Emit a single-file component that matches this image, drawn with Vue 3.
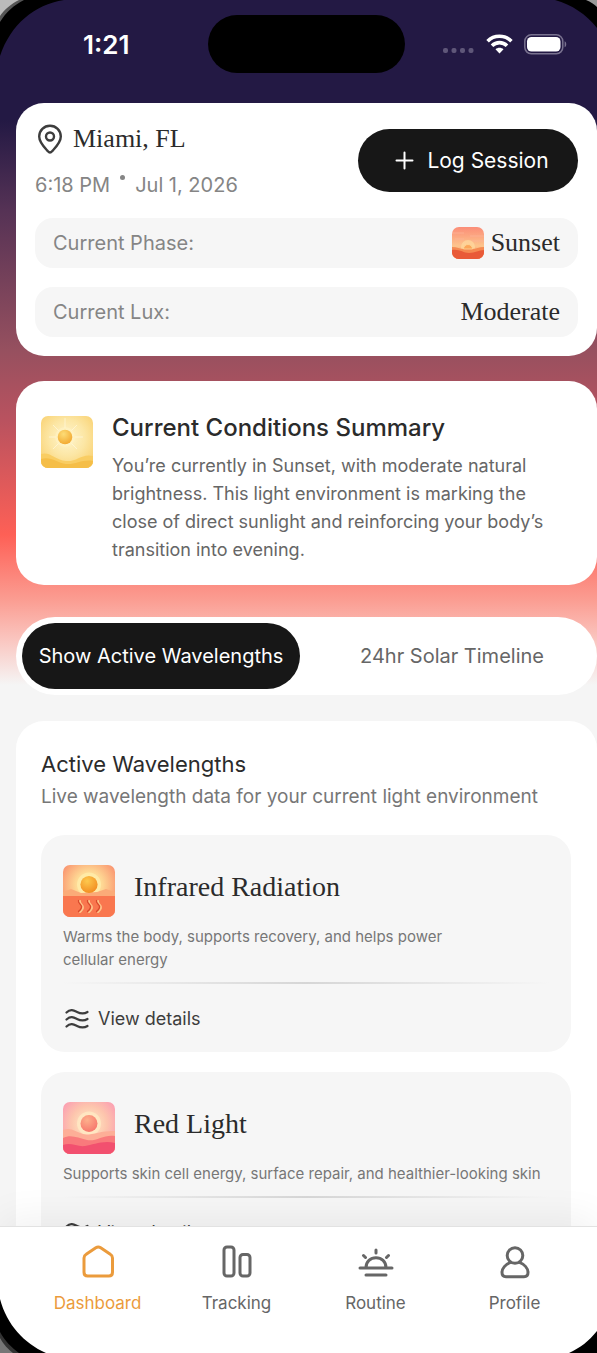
<script setup>
import { ref } from 'vue'

const activeTab = ref('wavelengths')
const activeNav = ref('dashboard')

const tabs = [
  { id: 'wavelengths', label: 'Show Active Wavelengths' },
  { id: 'timeline', label: '24hr Solar Timeline' },
]

const wavelengths = [
  {
    id: 'infrared',
    title: 'Infrared Radiation',
    text: 'Warms the body, supports recovery, and helps power\ncellular energy',
  },
  {
    id: 'red',
    title: 'Red Light',
    text: 'Supports skin cell energy, surface repair, and healthier-looking skin',
  },
]

const navItems = [
  { id: 'dashboard', label: 'Dashboard' },
  { id: 'tracking', label: 'Tracking' },
  { id: 'routine', label: 'Routine' },
  { id: 'profile', label: 'Profile' },
]
</script>

<template>
  <div class="phone">
    <header class="status-bar">
      <span class="time">1:21</span>
      <span class="island"></span>
      <div class="status-icons">
        <svg width="32" height="6" viewBox="0 0 32 6" fill="#5f5779">
          <rect x="0" y="0" width="5" height="5" rx="2" />
          <rect x="8.500" y="0" width="5" height="5" rx="2" />
          <rect x="17" y="0" width="5" height="5" rx="2" />
          <rect x="25.500" y="0" width="5" height="5" rx="2" />
        </svg>
        <svg width="27" height="20" viewBox="0 0 27 20" fill="none" stroke="#fff" stroke-width="3.600">
          <path d="M1.600 7.200C8 .6 19 .6 25.400 7.200" />
          <path d="M6 11.800c4.200-4.200 10.800-4.200 15 0" />
          <path d="M13.500 19.500l-4-4.300c2.300-2 5.700-2 8 0z" fill="#fff" stroke="none" />
        </svg>
        <svg width="43" height="21" viewBox="0 0 43 21">
          <rect x=".8" y=".8" width="38" height="19" rx="6.500" fill="none" stroke="#79728f" stroke-width="1.500" />
          <rect x="3" y="3" width="33.500" height="14.600" rx="4.500" fill="#fff" />
          <path d="M40.600 7.300c2.200.6 2.200 5.400 0 6z" fill="#79728f" />
        </svg>
      </div>
    </header>

    <main class="content">
      <section class="card location-card">
        <div class="location-head">
          <div class="location-info">
            <h1 class="place">
              <svg width="26" height="30" viewBox="0 0 26 30" fill="none" stroke="#3d3d3d" stroke-width="2.400">
                <path d="M13 28.500c-1.200 0-1.800-.9-2.700-1.900C6.600 22.600 2.200 18.300 2.200 12.600 2.200 6.400 7 1.700 13 1.700s10.800 4.700 10.800 10.900c0 5.700-4.400 10-8.100 14-.9 1-1.500 1.900-2.700 1.900z" />
                <circle cx="13" cy="12.500" r="4" />
              </svg>
              Miami, FL
            </h1>
            <p class="date"><span>6:18 PM</span><i class="dot"></i><span>Jul 1, 2026</span></p>
          </div>
          <button class="log-btn" type="button">
            <svg width="19" height="19" viewBox="0 0 19 19" stroke="#fff" stroke-width="2" stroke-linecap="round">
              <path d="M9.500 1.500v16M1.500 9.500h16" />
            </svg>
            Log Session
          </button>
        </div>

        <div class="stat">
          <span>Current Phase:</span>
          <strong>
            <svg class="art" width="32" height="32" viewBox="0 0 32 32">
              <defs>
                <linearGradient id="sunsetSky" x1="0" y1="0" x2="0" y2="1">
                  <stop offset="0" stop-color="#fb8d78" />
                  <stop offset=".6" stop-color="#fdc58c" />
                  <stop offset="1" stop-color="#f5714b" />
                </linearGradient>
              </defs>
              <rect width="32" height="32" fill="url(#sunsetSky)" />
              <path d="M0 6h12M18 9h14M3 12h9M20 14h12" stroke="#fdb49a" stroke-width="1" opacity=".7" />
              <circle cx="16" cy="20" r="7" fill="#fedaa0" opacity=".7" />
              <path d="M0 20c5 0 8 2 12 2h8c4 0 7-2 12-2v12H0z" fill="#f58a52" />
              <path d="M11.500 22a4.500 4.500 0 0 1 9 0z" fill="#fba65a" stroke="#fed79a" stroke-width=".8" />
              <path d="M0 23c8-1 11 3 17 3s10-3 15-3v9H0z" fill="#e95a38" />
            </svg>
            Sunset
          </strong>
        </div>
        <div class="stat">
          <span>Current Lux:</span>
          <strong>Moderate</strong>
        </div>
      </section>

      <section class="card summary-card">
        <svg class="art" width="52" height="52" viewBox="0 0 52 52">
          <defs>
            <radialGradient id="dayGlow" cx=".5" cy=".42" r=".7">
              <stop offset="0" stop-color="#fff6cf" />
              <stop offset=".5" stop-color="#fce6a4" />
              <stop offset="1" stop-color="#f9ce69" />
            </radialGradient>
            <radialGradient id="dayBall" cx=".4" cy=".3" r=".75">
              <stop offset="0" stop-color="#fddc76" />
              <stop offset="1" stop-color="#f2a72e" />
            </radialGradient>
          </defs>
          <rect width="52" height="52" fill="url(#dayGlow)" />
          <path d="M24 2v10M8 21h7M34 21h8M12 9l6 6M36 9l-6 6M12 33l6-6M36 33l-6-6" stroke="#fff8dd" opacity=".7" />
          <circle cx="24" cy="21" r="10" fill="#fff4c4" opacity=".6" />
          <circle cx="24" cy="21" r="7.300" fill="url(#dayBall)" />
          <path d="M0 38c9-3 14 6 25 7s16-8 27-5v12H0z" fill="#f9cd63" />
          <path d="M0 43c10-3 16 4 25 5s17-5 27-3v7H0z" fill="#f5be48" />
        </svg>
        <div>
          <h2>Current Conditions Summary</h2>
          <p>
            You’re currently in Sunset, with moderate natural brightness. This light environment is
            marking the close of direct sunlight and reinforcing your body’s transition into evening.
          </p>
        </div>
      </section>

      <div class="tabs">
        <button
          v-for="tab in tabs"
          :key="tab.id"
          type="button"
          :class="{ active: activeTab === tab.id }"
          @click="activeTab = tab.id"
        >
          {{ tab.label }}
        </button>
      </div>

      <section class="card waves-card">
        <h2>Active Wavelengths</h2>
        <p class="sub">Live wavelength data for your current light environment</p>

        <article v-for="wave in wavelengths" :key="wave.id" class="wave">
          <div class="wave-head">
            <svg v-if="wave.id === 'infrared'" class="art" width="52" height="52" viewBox="0 0 52 52">
              <defs>
                <radialGradient id="irSky" cx=".5" cy=".38" r=".65">
                  <stop offset="0" stop-color="#fff3b0" />
                  <stop offset=".4" stop-color="#fed793" />
                  <stop offset="1" stop-color="#f98769" />
                </radialGradient>
                <radialGradient id="irBall" cx=".4" cy=".3" r=".75">
                  <stop offset="0" stop-color="#fdc94e" />
                  <stop offset="1" stop-color="#f28a1f" />
                </radialGradient>
              </defs>
              <rect width="52" height="52" fill="url(#irSky)" />
              <circle cx="26" cy="19.500" r="12" fill="#fff3b0" opacity=".6" />
              <path d="M0 27l8-3 10 4 16-1 9-3 9 3v6H0z" fill="#fbab78" />
              <circle cx="26" cy="19.500" r="8.600" fill="url(#irBall)" />
              <path d="M0 31h52v21H0z" fill="#f9774f" />
              <g fill="none" stroke-linecap="round">
                <path d="M17 36c-1 3 4 4 3 7s-2 3-3 4M26 36c-1 3 4 4 3 7s-2 3-3 4M35 36c-1 3 4 4 3 7s-2 3-3 4" stroke="#fdc48a" stroke-width="2" />
                <path d="M15.500 35.500c-1 3 4 4 3 7s-2 3-3 4M24.500 35.500c-1 3 4 4 3 7s-2 3-3 4M33.500 35.500c-1 3 4 4 3 7s-2 3-3 4" stroke="#d94a2c" stroke-width="1.300" />
              </g>
            </svg>
            <svg v-else class="art" width="52" height="52" viewBox="0 0 52 52">
              <defs>
                <radialGradient id="redSky" cx=".5" cy=".42" r=".62">
                  <stop offset="0" stop-color="#fff0c8" />
                  <stop offset=".55" stop-color="#fdc5ad" />
                  <stop offset="1" stop-color="#fb9db2" />
                </radialGradient>
                <radialGradient id="redBall" cx=".4" cy=".3" r=".8">
                  <stop offset="0" stop-color="#fdb08c" />
                  <stop offset="1" stop-color="#f6716a" />
                </radialGradient>
              </defs>
              <rect width="52" height="52" fill="url(#redSky)" />
              <circle cx="26" cy="21.500" r="12" fill="#fff0c8" opacity=".6" />
              <circle cx="26" cy="21.500" r="8.500" fill="url(#redBall)" />
              <path d="M0 28c8-3 13 2 20 4s20-4 32-3v23H0z" fill="#fdae97" />
              <path d="M0 36c8-4 15 0 24 2s17-6 28-4v18H0z" fill="#f97a7c" />
              <path d="M0 43c8-3 14 2 22 1s18-6 30-3v11H0z" fill="#f2506f" />
            </svg>
            <h3>{{ wave.title }}</h3>
          </div>
          <p class="wave-text">{{ wave.text }}</p>
          <hr />
          <button class="details-btn" type="button">
            <svg width="24" height="20" viewBox="0 0 24 20" fill="none" stroke="#3d3d3d" stroke-width="2.200" stroke-linecap="round">
              <path d="M1.500 3.500C5.500-.5 9 1.500 12 3s6.500 2.500 10.500 0" />
              <path d="M1.500 10.500c4-4 7.500-2 10.500-.5s6.500 2.500 10.500 0" />
              <path d="M1.500 17.500c4-4 7.500-2 10.500-.5s6.500 2.500 10.500 0" />
            </svg>
            View details
          </button>
        </article>
      </section>
    </main>

    <nav class="bottom-nav">
      <a
        v-for="item in navItems"
        :key="item.id"
        href="#"
        :class="{ active: activeNav === item.id }"
        @click.prevent="activeNav = item.id"
      >
        <svg
          width="36" height="36" viewBox="0 0 36 36" fill="none" stroke="currentColor"
          stroke-width="3" stroke-linecap="round" stroke-linejoin="round"
        >
          <path v-if="item.id === 'dashboard'" d="M4 14c0-1.800.7-2.800 2.200-3.700l9.600-6.500c1.700-1.100 3.200-1.100 4.900 0l9.600 6.500c1.500.9 2.200 1.900 2.200 3.700v14.300c0 2.300-1.300 3.700-3.700 3.700H7.700C5.300 32 4 30.600 4 28.300z" />
          <g v-else-if="item.id === 'tracking'">
            <rect x="5" y="3" width="10" height="29" rx="3" />
            <rect x="21" y="10.500" width="10" height="21.500" rx="3" />
          </g>
          <path v-else-if="item.id === 'routine'" d="M2 24h32M8 31h20M8 23.500c0-6 4.500-9.800 10-9.800s10 3.800 10 9.800M18 6v3M5.500 11.500l2 2M30.500 11.500l-2 2" />
          <g v-else>
            <circle cx="18" cy="11.500" r="7.800" />
            <path d="M13.500 18.300C8.500 20.300 5 24.500 5 28.500c0 2.700 1.400 4.200 4 4.200h18c2.600 0 4-1.500 4-4.200 0-4-3.500-8.200-8.500-10.200" />
          </g>
        </svg>
        {{ item.label }}
      </a>
    </nav>

    <svg class="corner top-left" width="64" height="56" viewBox="0 0 64 56">
      <path d="M0 0h64C34 5 11 24 0 56z" fill="#000" />
      <path d="M0 0h24C14 5 6 12 0 22z" fill="#555" />
      <path d="M0 0h19C11 4 4 10 0 16z" fill="#bbb" />
    </svg>
    <svg class="corner top-right" width="42" height="28" viewBox="0 0 42 28">
      <path d="M0 0c17 5 31 14 42 28V0z" fill="#000" />
      <path d="M31 0c5 2 8 4 11 7V0z" fill="#999" />
    </svg>
    <svg class="corner bottom-left" width="46" height="54" viewBox="0 0 46 54">
      <path d="M0 0c7 26 24 44 46 54H0z" fill="#000" />
      <path d="M0 33c5 9 11 15 19 21H0z" fill="#333" />
      <path d="M0 39c4 7 8 11 13 15H0z" fill="#777" />
    </svg>
    <svg class="corner bottom-right" width="28" height="22" viewBox="0 0 28 22">
      <path d="M0 22C11 17 20 10 28 0v22z" fill="#000" />
    </svg>
  </div>
</template>

<style>
body {
  margin: 0;
}
</style>

<style scoped>
.phone {
  position: relative;
  display: flex;
  flex-direction: column;
  height: 100vh;
  overflow: hidden;
  font-family: Inter, "Liberation Sans", sans-serif;
  color: #2b2b2b;
  background: #f5f5f5 linear-gradient(#231944 0, #231944 120px, #553255 210px, #96505f 350px, #b9525f 420px, #fe6056 535px, #fb9d92 600px, #fac6c0 640px, #f5f5f5 685px);
}
.phone * {
  box-sizing: border-box;
}
h1, h2, h3, p {
  margin: 0;
  font-weight: 400;
}
button {
  font: inherit;
  border: none;
  cursor: pointer;
}

.status-bar {
  flex: none;
  display: grid;
  grid-template-columns: 192px 197px 1fr;
  align-items: center;
  height: 103px;
  padding: 0 30px 15px 16px;
}
.time {
  padding-left: 67px;
  font-size: 26px;
  font-weight: 600;
  color: #fff;
}
.island {
  height: 58px;
  border-radius: 29px;
  background: #000;
}
.status-icons {
  display: flex;
  align-items: center;
  justify-content: flex-end;
  gap: 11px;
}
.status-icons svg:first-child {
  margin-top: 14px;
}

.content {
  flex: 1;
  min-height: 0;
  overflow: hidden;
  padding-left: 16px;
}
.card {
  border-radius: 28px;
  background: #fff;
}
.art {
  flex: none;
  border-radius: 7px;
}

.location-card {
  display: flex;
  flex-direction: column;
  gap: 19px;
  padding: 19px;
}
.location-head {
  display: flex;
  justify-content: space-between;
  height: 77px;
}
.place {
  display: flex;
  align-items: center;
  gap: 10px;
  padding-left: 2px;
  font-family: "Liberation Serif", serif;
  font-size: 26px;
  line-height: 34px;
}
.date {
  display: flex;
  margin-top: 15px;
  font-size: 20px;
  line-height: 28px;
  color: #858585;
}
.dot {
  width: 5px;
  height: 5px;
  margin: 4px 10px 0;
  border-radius: 50%;
  background: #858585;
}
.log-btn {
  display: flex;
  align-items: center;
  justify-content: center;
  gap: 13px;
  width: 220px;
  height: 63px;
  margin-top: 7px;
  padding: 0 0 0 8px;
  border-radius: 32px;
  background: #171717;
  color: #fff;
  font-size: 21px;
}
.stat {
  display: flex;
  align-items: center;
  justify-content: space-between;
  height: 50px;
  padding: 0 18px;
  border-radius: 18px;
  background: #f6f6f6;
  font-size: 20px;
  color: #858585;
}
.stat strong {
  display: flex;
  align-items: center;
  gap: 7px;
  font-family: "Liberation Serif", serif;
  font-size: 26px;
  font-weight: 400;
  color: #2b2b2b;
}

.summary-card {
  display: flex;
  gap: 19px;
  margin-top: 25px;
  padding: 30px 26px 21px 25px;
}
.summary-card .art {
  margin-top: 5px;
}
.summary-card h2 {
  font-size: 24px;
  font-weight: 500;
  line-height: 34px;
}
.summary-card p {
  margin-top: 7px;
  font-size: 18px;
  line-height: 28px;
  color: #666;
}

.tabs {
  display: flex;
  gap: 13px;
  margin-top: 32px;
  padding: 6px;
  border-radius: 39px;
  background: #fff;
}
.tabs button {
  flex: 1 1 0;
  height: 66px;
  padding: 0;
  border-radius: 33px;
  background: transparent;
  color: #666;
  font-size: 20px;
  white-space: nowrap;
}
.tabs button.active {
  background: #171717;
  color: #fff;
}

.waves-card {
  margin-top: 26px;
  padding: 28px 26px 28px 25px;
}
.waves-card h2 {
  font-size: 22px;
  line-height: 30px;
}
.sub {
  margin-top: 4px;
  font-size: 19px;
  line-height: 28px;
  color: #777;
}
.wave {
  margin-top: 20px;
  padding: 30px 22px 19px;
  border-radius: 24px;
  background: #f6f6f6;
}
.sub + .wave {
  margin-top: 24px;
}
.wave-head {
  display: flex;
  align-items: center;
  gap: 19px;
}
.wave h3 {
  padding-bottom: 8px;
  font-family: "Liberation Serif", serif;
  font-size: 28px;
  line-height: 34px;
}
.wave-text {
  margin-top: 8px;
  font-size: 15px;
  line-height: 23px;
  color: #777;
  white-space: pre-line;
}
hr {
  height: 2px;
  margin: 11px 0 21px;
  border: none;
  background: linear-gradient(90deg, transparent, #d6d6d6 50%, transparent);
}
.details-btn {
  display: flex;
  align-items: center;
  gap: 9px;
  padding: 0 2px;
  background: transparent;
  color: #3d3d3d;
  font-size: 18px;
  line-height: 28px;
}

.bottom-nav {
  position: relative;
  flex: none;
  display: flex;
  height: 127px;
  padding: 17px 13px 0 28px;
  border-top: 1px solid #e2e2e2;
  background: #fff;
  box-shadow: 0 -8px 36px rgba(0, 0, 0, 0.06);
}
.bottom-nav a {
  flex: 1 1 0;
  display: flex;
  flex-direction: column;
  align-items: center;
  gap: 11px;
  color: #666;
  font-size: 17px;
  line-height: 24px;
  text-decoration: none;
}
.bottom-nav a.active {
  color: #eb9b3c;
}

.corner {
  position: absolute;
  pointer-events: none;
}
.top-left { top: 0; left: 0; }
.top-right { top: 0; right: 0; }
.bottom-left { bottom: 0; left: 0; }
.bottom-right { bottom: 0; right: 0; }
</style>
